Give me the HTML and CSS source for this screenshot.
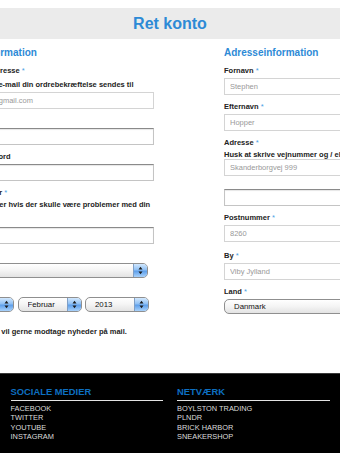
FILE: index.html
```html
<!DOCTYPE html>
<html>

<head>
    <meta charset="utf-8">
    <title>Ret konto</title>
    <link rel="stylesheet" href="styles.css">
</head>

<body>
    <div id="title">
        Ret konto
    </div>
    <div class="page">
        <form class="columns">
            <div class="column">
                <h2>Kontoinformation</h2>
                <div class="field">
                    <label>Din e-mail-adresse <span class="req">*</span></label>
                    <div class="hint">Dette er den e-mail din ordrebekræftelse sendes til</div>
                    <input type="text" class="text filled" value="eksempel@gmail.com">
                </div>
                <div class="field">
                    <label>Kodeord</label>
                    <input type="password" class="text">
                </div>
                <div class="field">
                    <label>Gentag kodeord</label>
                    <input type="password" class="text">
                </div>
                <div class="field">
                    <label>Mobilnummer <span class="req">*</span></label>
                    <div class="hint long">Så vi kontakter hvis der skulle være problemer med din ordre</div>
                    <input type="text" class="text">
                </div>
                <div class="field">
                    <label>Køn</label>
                    <div class="select gender">
                        <select><option>Vælg</option></select>
                        <span class="arrows"><svg width="5" height="9" viewBox="0 0 5 9"><path d="M0.5 3.5 L2.5 0.8 L4.5 3.5 Z M0.5 5.5 L4.5 5.5 L2.5 8.2 Z" fill="#1c1c1c"/></svg></span>
                    </div>
                </div>
                <div class="field">
                    <label>Fødselsdato</label>
                    <div class="date-row">
                        <div class="select day">
                            <select><option>12</option></select>
                            <span class="arrows"><svg width="5" height="9" viewBox="0 0 5 9"><path d="M0.5 3.5 L2.5 0.8 L4.5 3.5 Z M0.5 5.5 L4.5 5.5 L2.5 8.2 Z" fill="#1c1c1c"/></svg></span>
                        </div>
                        <div class="select month">
                            <select><option>Februar</option></select>
                            <span class="arrows"><svg width="5" height="9" viewBox="0 0 5 9"><path d="M0.5 3.5 L2.5 0.8 L4.5 3.5 Z M0.5 5.5 L4.5 5.5 L2.5 8.2 Z" fill="#1c1c1c"/></svg></span>
                        </div>
                        <div class="select year">
                            <select><option>2013</option></select>
                            <span class="arrows"><svg width="5" height="9" viewBox="0 0 5 9"><path d="M0.5 3.5 L2.5 0.8 L4.5 3.5 Z M0.5 5.5 L4.5 5.5 L2.5 8.2 Z" fill="#1c1c1c"/></svg></span>
                        </div>
                    </div>
                </div>
                <label class="check"><input type="checkbox">Ja tak, jeg vil gerne modtage nyheder på mail.</label>
            </div>
            <div class="column">
                <h2>Adresseinformation</h2>
                <div class="field">
                    <label>Fornavn <span class="req">*</span></label>
                    <input type="text" class="text filled" value="Stephen">
                </div>
                <div class="field">
                    <label>Efternavn <span class="req">*</span></label>
                    <input type="text" class="text filled" value="Hopper">
                </div>
                <div class="field">
                    <label>Adresse <span class="req">*</span></label>
                    <div class="hint near">Husk at skrive vejnummer og / eller etage og dørnummer</div>
                    <input type="text" class="text filled" value="Skanderborgvej 999">
                    <input type="text" class="text second">
                </div>
                <div class="field">
                    <label>Postnummer <span class="req">*</span></label>
                    <input type="text" class="text filled" value="8260">
                </div>
                <div class="field lower">
                    <label>By <span class="req">*</span></label>
                    <input type="text" class="text filled" value="Viby Jylland">
                </div>
                <div class="field">
                    <label>Land <span class="req">*</span></label>
                    <div class="select country">
                        <select><option>Danmark</option></select>
                        <span class="arrows"><svg width="5" height="9" viewBox="0 0 5 9"><path d="M0.5 3.5 L2.5 0.8 L4.5 3.5 Z M0.5 5.5 L4.5 5.5 L2.5 8.2 Z" fill="#1c1c1c"/></svg></span>
                    </div>
                </div>
            </div>
        </form>
    </div>
    <div id="footer">
        <div class="footer-col">
            <h3>SOCIALE MEDIER</h3>
            <ul>
                <li>FACEBOOK</li>
                <li>TWITTER</li>
                <li>YOUTUBE</li>
                <li>INSTAGRAM</li>
            </ul>
        </div>
        <div class="footer-col">
            <h3>NETVÆRK</h3>
            <ul>
                <li>BOYLSTON TRADING</li>
                <li>PLNDR</li>
                <li>BRICK HARBOR</li>
                <li>SNEAKERSHOP</li>
            </ul>
        </div>
    </div>
</body>

</html>
```

FILE: styles.css
```css
body {
    margin: 0;
    background-color: #fff;
    font-family: "Liberation Sans", Arial, sans-serif;
    color: #222;
    overflow: hidden;
}

#title {
    margin-top: 8px;
    height: 31px;
    line-height: 31px;
    background-color: #ebebeb;
    text-align: center;
    font-size: 16px;
    font-weight: bold;
    color: #2d8ad6;
}

.page {
    overflow: hidden;
}

.columns {
    display: flex;
    gap: 70px;
    width: 472px;
    margin: 7.5px 0 0 -47px;
    padding-bottom: 36px;
}

.column {
    flex: none;
    width: 201px;
}

h2 {
    margin: 0 0 7px;
    font-size: 10px;
    line-height: 12px;
    color: #2d8ad6;
    white-space: nowrap;
}

.field {
    margin-bottom: 7px;
}

.field.lower {
    margin-top: 9px;
}

.field label {
    display: block;
    margin-bottom: 3px;
    font-size: 7.5px;
    line-height: 9px;
    font-weight: bold;
    white-space: nowrap;
}

.req {
    color: #4b9fe4;
    font-weight: normal;
}

.hint {
    margin: 5px 0 3.5px;
    font-size: 7.5px;
    line-height: 9px;
    font-weight: bold;
    white-space: nowrap;
}

.hint.long {
    margin: 2px 0 7px;
    line-height: 10px;
    white-space: normal;
}

.hint.near {
    margin: 2.5px 0 0.5px;
}

input.text {
    display: block;
    box-sizing: border-box;
    width: 100%;
    height: 17px;
    margin: 0;
    padding: 0 5px;
    border: 1px solid #c4c4c4;
    border-top-color: #8a8a8a;
    box-shadow: inset 0 1px 1px rgba(0, 0, 0, 0.1);
    font-family: "Liberation Sans", Arial, sans-serif;
    font-size: 7.5px;
    color: #999;
    background-color: #fff;
}

input.filled {
    border-color: #d4d4d4;
    box-shadow: none;
}

input.second {
    margin-top: 13px;
}

.select {
    display: flex;
    box-sizing: border-box;
    height: 15px;
    border: 1px solid #8f8f8f;
    border-radius: 5px;
    background: linear-gradient(#ffffff, #f4f4f4 50%, #e3e3e3);
    overflow: hidden;
}

.select select {
    flex: 1;
    min-width: 0;
    height: 13px;
    margin: 0;
    padding: 0 0 0 9px;
    border: none;
    background: transparent;
    appearance: none;
    -webkit-appearance: none;
    font-family: "Liberation Sans", Arial, sans-serif;
    font-size: 7.8px;
    color: #111;
}

.arrows {
    display: flex;
    flex: none;
    align-items: center;
    justify-content: center;
    width: 13px;
    border-left: 1px solid #7f9fc6;
    background: linear-gradient(#d2e8fe, #8fc0f4 45%, #5e9fea 55%, #a9d2fb);
}

.gender {
    width: 195px;
}

.country {
    width: 100%;
}

.date-row {
    display: flex;
    gap: 3.5px;
}

.day {
    width: 61px;
}

.month,
.year {
    width: 64px;
}

.check {
    display: block;
    margin-top: 13.5px;
    font-size: 7.5px;
    line-height: 11px;
    font-weight: bold;
    white-space: nowrap;
}

.check input {
    width: 10px;
    height: 10px;
    margin: 0;
    vertical-align: middle;
}

#footer {
    display: flex;
    justify-content: center;
    gap: 14px;
    padding: 12px 0 24px;
    background-color: #000;
    border-top: 1px solid #3a3a3a;
}

.footer-col {
    width: 152.5px;
}

.footer-col h3 {
    margin: 0;
    padding-bottom: 2px;
    border-bottom: 1px solid #e4e4e4;
    font-size: 9.4px;
    line-height: 12px;
    color: #0d6fc1;
}

.footer-col ul {
    margin: 3.5px 0 0;
    padding: 0;
    list-style: none;
}

.footer-col li {
    font-size: 7.4px;
    line-height: 9.3px;
    color: #dcdcdc;
}
```
